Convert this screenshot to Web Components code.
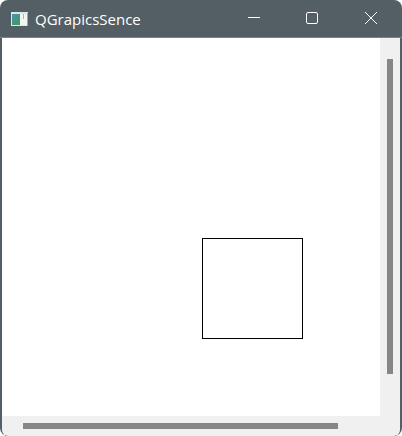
<!DOCTYPE html>
<html><head><meta charset="utf-8"><style>
html,body{margin:0;padding:0;background:#fff;overflow:hidden}
body{width:402px;height:436px}
</style></head><body>
<app-window title-text="QGrapicsSence"><scene-view></scene-view></app-window>
<script>
class AppWindow extends HTMLElement{
  constructor(){super();const s=this.attachShadow({mode:'open'});
  s.innerHTML=`<style>
  :host{display:flex;flex-direction:column;box-sizing:border-box;width:402px;height:436px;background:#535f65;border-radius:8px;padding:0 2px;overflow:hidden}
  .bar{flex:none;height:37px;display:flex;align-items:center;margin:0 -2px;color:#fff}
  .icon{flex:none;width:17px;height:14px;margin:0 0 0 11px;display:block}
  .title{flex:1;margin-left:7px;font:15px "Open Sans","Noto Sans",sans-serif;white-space:nowrap}
  .btn{flex:none;width:58px;height:37px;display:flex;align-items:center;justify-content:center}
  .btn svg{display:block;width:16px;height:16px;margin-bottom:1px}
  .line{flex:none;height:1px;background:#7d8288;margin:0 -2px}
  .body{flex:1;min-height:0;display:flex;border-radius:0 0 6px 6px;overflow:hidden}
  </style>
  <div class="bar">
    <svg class="icon" viewBox="0 0 17 14"><defs><linearGradient id="g" x1="0" y1="0" x2="0.6" y2="1"><stop offset="0" stop-color="#4f93a8"/><stop offset="1" stop-color="#3f9a68"/></linearGradient></defs><rect width="17" height="14" fill="#dfe6ea"/><rect x="1" y="2" width="8" height="11" fill="url(#g)"/><rect x="9" y="2" width="7" height="11" fill="#f2f6f2"/><rect x="12" y="2" width="1" height="5" fill="#8fc4a4"/><rect x="16" y="1" width="1" height="13" fill="#9aa6ab"/></svg>
    <span class="title">${this.getAttribute('title-text')}</span>
    <span class="btn"><svg viewBox="0 0 16 16"><path d="M2 7.5H14" stroke="#fff" fill="none"/></svg></span>
    <span class="btn" style="margin-right:1px"><svg viewBox="0 0 16 16"><rect x="2.5" y="2.5" width="11" height="11" rx="1.5" stroke="#fff" fill="none"/></svg></span>
    <span class="btn" style="margin-right:2px"><svg viewBox="0 0 16 16"><path d="M2 2L14 14M14 2L2 14" stroke="#fff" fill="none"/></svg></span>
  </div>
  <div class="line"></div>
  <div class="body"><slot></slot></div>`;}
}
class SceneView extends HTMLElement{
  constructor(){super();const s=this.attachShadow({mode:'open'});
  s.innerHTML=`<style>
  :host{display:grid;flex:1;min-width:0;grid-template-columns:1fr 20px;grid-template-rows:1fr 20px;background:#f0f0f0}
  .canvas{background:#fff;position:relative}
  .item{position:absolute;left:200px;top:200px;width:101px;height:101px;box-sizing:border-box;border:1px solid #000}
  .v{display:flex;justify-content:center;padding:21px 0 42px;box-sizing:border-box}
  .v i{display:block;width:6px;background:#868686}
  .h{padding:7px 42px 7px 21px;box-sizing:border-box}
  .h i{display:block;height:6px;background:#868686}
  </style>
  <div class="canvas"><div class="item"></div></div>
  <div class="v"><i></i></div>
  <div class="h"><i></i></div>
  <div></div>`;}
}
customElements.define('app-window',AppWindow);
customElements.define('scene-view',SceneView);
</script></body></html>
